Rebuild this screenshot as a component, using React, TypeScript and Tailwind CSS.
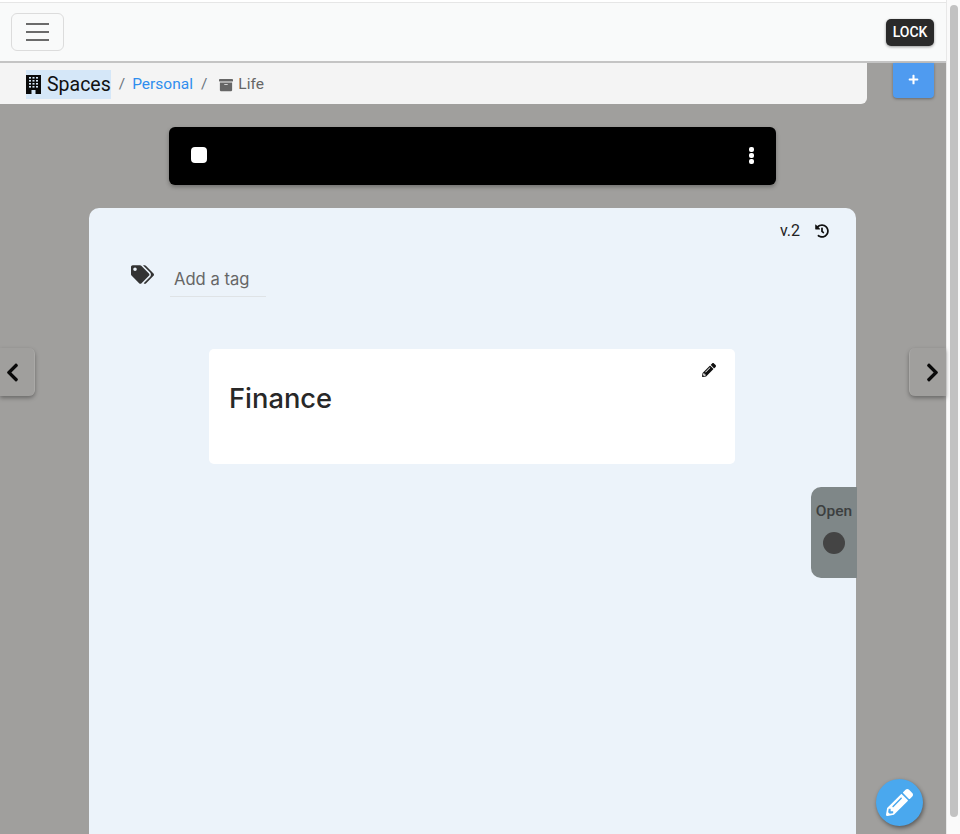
import { FaArchive, FaChevronLeft, FaChevronRight, FaHistory, FaPencilAlt, FaPlus, FaTags } from "react-icons/fa";

function PageArrow({ side }: { side: "left" | "right" }) {
  if (side === "left") {
    return (
      <button className="absolute left-0 top-[348px] flex h-12 w-[35px] items-center justify-center rounded-r-md border-r border-[#aaa9a7] bg-[#a09f9d] pr-[10px] shadow-[0_2px_4px_rgba(0,0,0,0.35)]">
        <FaChevronLeft className="text-[21px] text-[#0a0a0a]" />
      </button>
    );
  }
  return (
    <button className="absolute right-0 top-[348px] flex h-12 w-[37px] items-center justify-center rounded-l-md border-l border-[#aaa9a7] bg-[#a09f9d] pl-[8px] shadow-[0_2px_4px_rgba(0,0,0,0.35)]">
      <FaChevronRight className="text-[21px] text-[#0a0a0a]" />
    </button>
  );
}

function BuildingIcon() {
  const cols = [3, 6.5, 10];
  const rows = [2, 5, 8, 11];
  return (
    <svg width="15" height="19" viewBox="0 0 15 19">
      <rect width="15" height="19" fill="#0a0a0a" />
      {rows.map((y) =>
        cols.map((x) => <rect key={`${x}-${y}`} x={x} y={y} width="2" height="1.6" fill="#d5e7f8" />),
      )}
      <rect x="5.5" y="15" width="4" height="4" fill="#d5e7f8" />
    </svg>
  );
}

export default function App() {
  return (
    <div className="flex h-[834px] w-[960px] overflow-hidden bg-white font-['Roboto',sans-serif]">
      <div className="relative flex h-full w-[946px] flex-col bg-[#a09f9d]">
        {/* Navbar */}
        <div className="h-[2px] shrink-0 bg-white" />
        <header className="flex h-[61px] shrink-0 items-center justify-between border-t border-b-2 border-t-[#e6e6e6] border-b-[#c4c4c4] bg-[#f9fafa] pl-[11px] pr-3">
          <button className="flex h-[38px] w-[53px] flex-col items-center justify-center gap-[6px] rounded-md border border-[#dcdcdc]">
            <span className="h-[2px] w-[23px] bg-[#6b6b6b]" />
            <span className="h-[2px] w-[23px] bg-[#6b6b6b]" />
            <span className="h-[2px] w-[23px] bg-[#6b6b6b]" />
          </button>
          <button className="flex h-[27px] w-[48px] items-center justify-center rounded-[5px] bg-[#2a2a2a] pt-[1px] text-[14px] font-medium text-white shadow-[0_1px_3px_rgba(0,0,0,0.4)]">
            LOCK
          </button>
        </header>

        {/* Breadcrumb */}
        <div className="flex shrink-0 items-start">
          <nav className="flex h-[41px] w-[867px] items-center rounded-br-md bg-[#f4f4f4] pl-[26px] pt-[2px]">
            <span className="flex h-[29px] items-center gap-[6px] bg-[#d5e7f8] text-[19.5px] text-[#111]">
              <BuildingIcon />
              Spaces
            </span>
            <span className="ml-2 text-[15.5px] text-[#6c757d]">/</span>
            <span className="ml-[7px] text-[15.5px] text-[#2f8eee]">Personal</span>
            <span className="ml-[8px] text-[15.5px] text-[#6c757d]">/</span>
            <span className="ml-3 flex items-center gap-[5px] text-[15.5px] text-[#666]">
              <FaArchive className="text-[14px]" />
              Life
            </span>
          </nav>
          <button className="ml-[26px] flex h-[35px] w-[41px] items-center justify-center rounded-b-[4px] bg-[#4f9bf0] pb-[2px] shadow-[0_1px_3px_rgba(0,0,0,0.35)]">
            <FaPlus className="text-[11px] text-white" />
          </button>
        </div>

        {/* Player bar */}
        <div className="ml-[169px] mt-[23px] flex h-[58px] w-[607px] shrink-0 items-center justify-between rounded-md bg-black pb-[2px] pl-[22px] pr-[22px] shadow-[0_2px_4px_rgba(0,0,0,0.3)]">
          <span className="h-4 w-4 rounded-[4px] bg-white" />
          <span className="flex flex-col gap-[1px]">
            <span className="h-[5px] w-[5px] rounded-[2px] bg-white" />
            <span className="h-[5px] w-[5px] rounded-[2px] bg-white" />
            <span className="h-[5px] w-[5px] rounded-[2px] bg-white" />
          </span>
        </div>

        {/* Page */}
        <main className="ml-[89px] mt-[23px] w-[767px] flex-1 rounded-t-[10px] bg-[#ecf3fa]">
          <div className="flex items-center justify-end gap-[15px] pr-[27px] pt-[13px] text-[16px] leading-[19px] text-[#222]">
            <span>v.2</span>
            <FaHistory className="text-[14px] text-[#111]" />
          </div>
          <div className="ml-[42px] mt-[17px] flex items-start gap-[16px]">
            <FaTags className="mt-[6px] text-[23px] text-[#333]" />
            <div className="mt-[5px] h-[35px] w-[96px] border-b border-[#dfe3e6] pl-[4px] pt-[4px] font-['Inter',sans-serif] text-[16.6px] leading-[26px] text-[#666]">
              Add a tag
            </div>
          </div>
          <section className="relative ml-[120px] mt-[52px] h-[115px] w-[526px] rounded-[5px] bg-white pl-5 pt-[32px]">
            <FaPencilAlt className="absolute right-[19px] top-[14px] text-[14px] text-[#111]" />
            <h2 className="font-['Inter',sans-serif] text-[27.3px] font-medium leading-[36px] text-[#282828]">Finance</h2>
          </section>
        </main>

        <PageArrow side="left" />
        <PageArrow side="right" />

        {/* Open tab */}
        <div className="absolute left-[811px] top-[487px] flex h-[91px] w-[46px] flex-col items-center rounded-l-[10px] bg-[#7f8788] pt-[15px]">
          <span className="text-[15.5px] font-medium leading-[19px] text-[#3c3f40]">Open</span>
          <span className="mt-[11px] h-[22px] w-[22px] rounded-full bg-[#444]" />
        </div>

        {/* Floating edit */}
        <button className="absolute left-[876px] top-[779px] flex h-[47px] w-[47px] items-center justify-center rounded-full bg-[#4aa8ee] shadow-[1px_2px_4px_rgba(0,0,0,0.45)]">
          <FaPencilAlt className="text-[27px] text-white" />
        </button>
      </div>

      {/* Scrollbar */}
      <div className="h-full w-[14px] border-l border-[#e8e8e8] bg-[#fafafa] pl-[3px] pt-[5px]">
        <div className="h-[812px] w-[8px] rounded-full bg-[#c2c2c2]" />
      </div>
    </div>
  );
}
